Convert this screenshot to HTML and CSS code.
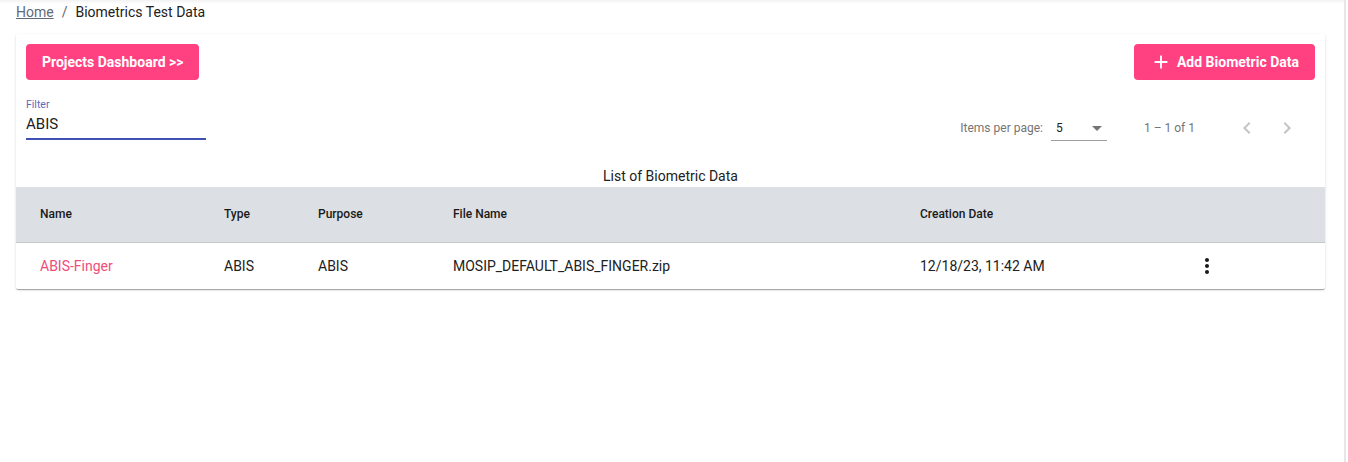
FILE: index.html
```html
<!DOCTYPE html>
<html>
<head>
<meta charset="utf-8">
<link rel="stylesheet" href="styles.css">
</head>
<body>
<div class="page">
  <nav class="crumbs">
    <a class="crumb-link" href="#">Home</a>
    <span class="crumb-sep">/</span>
    <span class="crumb-current">Biometrics Test Data</span>
  </nav>
  <section class="card">
    <div class="card-top">
      <button class="btn">Projects Dashboard &gt;&gt;</button>
      <button class="btn btn-add">
        <svg class="plus" viewBox="0 0 24 24" width="24" height="24"><path d="M19 13h-6v6h-2v-6H5v-2h6V5h2v6h6v2z" fill="#fff"/></svg>
        Add Biometric Data
      </button>
    </div>
    <div class="tools">
      <div class="filter">
        <div class="filter-label">Filter</div>
        <div class="filter-value">ABIS</div>
      </div>
      <div class="paginator">
        <span class="pg-label">Items per page:</span>
        <div class="pg-select">
          <span>5</span>
          <span class="pg-arrow"></span>
        </div>
        <span class="pg-range">1 – 1 of 1</span>
        <div class="pg-nav">
          <svg viewBox="0 0 24 24" width="24" height="24"><path d="M15.41 7.41L14 6l-6 6 6 6 1.41-1.41L10.83 12z" fill="#c4c4c4"/></svg>
          <svg viewBox="0 0 24 24" width="24" height="24"><path d="M10 6L8.59 7.41 13.17 12l-4.58 4.59L10 18l6-6z" fill="#c4c4c4"/></svg>
        </div>
      </div>
    </div>
    <div class="caption">List of Biometric Data</div>
    <table class="grid">
      <thead>
        <tr>
          <th class="c-name">Name</th>
          <th class="c-type">Type</th>
          <th class="c-purpose">Purpose</th>
          <th class="c-file">File Name</th>
          <th class="c-date">Creation Date</th>
          <th class="c-act"></th>
        </tr>
      </thead>
      <tbody>
        <tr>
          <td class="c-name name-link">ABIS-Finger</td>
          <td>ABIS</td>
          <td>ABIS</td>
          <td>MOSIP_DEFAULT_ABIS_FINGER.zip</td>
          <td>12/18/23, 11:42 AM</td>
          <td class="c-act">
            <svg viewBox="0 0 24 24" width="24" height="24"><path d="M12 8c1.1 0 2-.9 2-2s-.9-2-2-2-2 .9-2 2 .9 2 2 2zm0 2c-1.1 0-2 .9-2 2s.9 2 2 2 2-.9 2-2-.9-2-2-2zm0 6c-1.1 0-2 .9-2 2s.9 2 2 2 2-.9 2-2-.9-2-2-2z" fill="#1a1a1a"/></svg>
          </td>
        </tr>
      </tbody>
    </table>
  </section>
</div>
</body>
</html>
```

FILE: styles.css
```css
* { box-sizing: border-box; }
html, body { margin: 0; padding: 0; background: #fff; }
body {
  font-family: Roboto, "Liberation Sans", Arial, sans-serif;
  color: #212121;
}
.page {
  width: 1346px;
  min-height: 462px;
  border-right: 2px solid #e6e6e6;
  padding: 0 19px 0 16px;
  background: linear-gradient(#f2f2f2, #fff 4px);
}
.crumbs {
  height: 34px;
  padding-top: 2px;
  font-size: 14px;
  line-height: 20px;
  display: flex;
  gap: 8px;
}
.crumb-link { color: #5f6b7a; text-decoration: underline; }
.crumb-sep { color: #666; }
.crumb-current { color: #212121; }
.card {
  width: 1309px;
  background: #fff;
  box-shadow: 0 2px 1px -1px rgba(0,0,0,.2), 0 1px 1px 0 rgba(0,0,0,.14), 0 1px 3px 0 rgba(0,0,0,.12);
  border-radius: 2px;
}
.card-top {
  display: flex;
  justify-content: space-between;
  padding: 10px 10px 0 10px;
}
.btn {
  height: 36px;
  background: #ff4081;
  color: #fff;
  border: 0;
  border-radius: 4px;
  font-family: Roboto, "Liberation Sans", Arial, sans-serif;
  font-size: 14px;
  font-weight: 700;
  padding: 0 16px;
  display: flex;
  align-items: center;
}
.btn-add { padding: 0 16px 0 16px; gap: 5px; }
.plus { width: 22px; height: 22px; }
.tools {
  display: flex;
  justify-content: space-between;
  padding: 0 10px;
  height: 94px;
}
.filter {
  width: 180px;
  padding-top: 19px;
}
.filter-label {
  font-size: 10.5px;
  color: #5c6bc0;
  line-height: 12px;
}
.filter-value {
  font-size: 15px;
  line-height: 20px;
  padding: 3px 0 4px;
  border-bottom: 2px solid #3f51b5;
}
.paginator {
  display: flex;
  align-items: center;
  height: 28px;
  margin-top: 34px;
  margin-right: -2px;
  font-size: 12px;
  color: #757575;
}
.pg-label { margin-right: 8px; }
.pg-select {
  align-self: flex-start;
  margin-top: 2px;
  width: 56px;
  height: 25px;
  border-bottom: 1px solid #9e9e9e;
  display: flex;
  justify-content: space-between;
  align-items: center;
  padding: 0 5px;
  color: #212121;
  font-size: 12px;
}
.pg-arrow {
  width: 0; height: 0;
  border-left: 5px solid transparent;
  border-right: 5px solid transparent;
  border-top: 5px solid #757575;
}
.pg-range { margin-left: 37px; margin-right: 40px; }
.pg-nav { display: flex; gap: 16px; margin-right: 18px; }
.caption {
  text-align: center;
  font-size: 14px;
  line-height: 18px;
  height: 20px;
  margin-top: -7px;
}
.grid {
  width: 100%;
  border-collapse: collapse;
  table-layout: fixed;
  font-size: 14px;
}
.grid thead tr {
  background: #dcdfe3;
  height: 55px;
}
.grid th {
  text-align: left;
  font-size: 12px;
  font-weight: 500;
  color: #1a1a1a;
  padding: 0;
  border-bottom: 1px solid #c7c7c7;
}
.grid td {
  height: 47px;
  padding: 0;
  color: #212121;
}
.c-name { width: 208px; padding-left: 24px !important; }
.c-type { width: 94px; }
.c-purpose { width: 135px; }
.c-file { width: 467px; }
.c-date { width: 275px; }
.c-act svg { display: block; }
.name-link { color: #ef4c7a !important; }
```
